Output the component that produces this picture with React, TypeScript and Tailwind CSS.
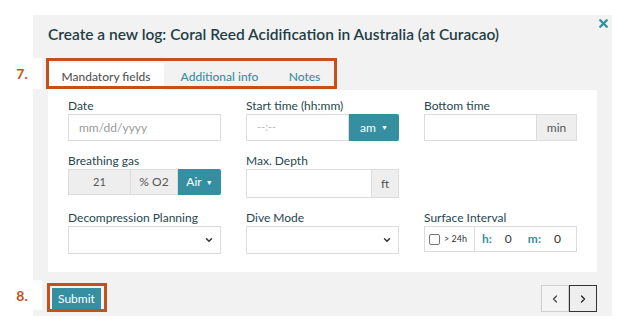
import { X, ChevronDown, ChevronLeft, ChevronRight } from "lucide-react";

function Label({ children }: { children: React.ReactNode }) {
  return <div className="h-[16px] text-[12px] leading-[16px] text-[#27464e]">{children}</div>;
}

function Select() {
  return (
    <div className="flex h-[28px] items-center justify-end border border-[#dcdcdc] bg-white pr-[6px]">
      <ChevronDown size={10} strokeWidth={3.5} className="text-[#333]" />
    </div>
  );
}

export default function App() {
  return (
    <div className="relative h-[327px] w-[626px] bg-white pt-[15px] pl-[33px] font-['Lato',sans-serif]">
      <div className="relative h-[301px] w-[579px] bg-[#f2f2f2] pl-[15px] pr-[15px] pt-[9px]">
        <button className="absolute right-[2px] top-[2px] text-[#358fa0]">
          <X size={13} strokeWidth={4.5} />
        </button>
        <h1 className="text-[15.5px] leading-[20px] font-semibold text-[#1f3e46]">
          Create a new log: Coral Reed Acidification in Australia (at Curacao)
        </h1>

        <div className="mt-[19px] flex h-[27px] text-[12px] font-medium">
          <div className="flex w-[116px] items-center justify-center bg-white text-[#555]">Mandatory fields</div>
          <div className="flex w-[111px] items-center justify-center text-[#3a8fa0]">Additional info</div>
          <div className="flex w-[59px] items-center justify-center text-[#3a8fa0]">Notes</div>
        </div>

        <div className="h-[182px] bg-white pl-[20px] pt-[8px]">
          <div className="grid w-[509px] grid-cols-3 gap-x-[25px] gap-y-[12px]">
            <div>
              <Label>Date</Label>
              <div className="flex h-[27px] items-center border border-[#dcdcdc] pl-[10px] text-[12px] text-[#9a9a9a]">
                mm/dd/yyyy
              </div>
            </div>
            <div>
              <Label>Start time (hh:mm)</Label>
              <div className="flex h-[27px]">
                <div className="flex flex-1 items-center border border-[#dcdcdc] pl-[10px] text-[11px] text-[#bbb]">--:--</div>
                <div className="flex w-[50px] items-center justify-center gap-[5px] rounded-r-[2px] bg-[#358fa0] text-[12px] text-white">
                  am <span className="text-[7px]">▼</span>
                </div>
              </div>
            </div>
            <div>
              <Label>Bottom time</Label>
              <div className="flex h-[27px]">
                <div className="flex-1 border border-[#dcdcdc]" />
                <div className="flex w-[40px] items-center justify-center border border-l-0 border-[#dcdcdc] bg-[#eeeeee] text-[12px] text-[#555]">
                  min
                </div>
              </div>
            </div>

            <div>
              <Label>Breathing gas</Label>
              <div className="flex h-[26px] text-[12px] text-[#555]">
                <div className="flex w-[63px] items-center justify-center border border-[#dcdcdc] bg-[#eeeeee] text-[11px]">21</div>
                <div className="flex w-[47px] items-center justify-center border border-l-0 border-[#dcdcdc] bg-[#eeeeee]">% O2</div>
                <div className="flex flex-1 items-center justify-center gap-[4px] rounded-r-[2px] bg-[#358fa0] text-white">
                  Air <span className="text-[7px]">▼</span>
                </div>
              </div>
            </div>
            <div>
              <Label>Max. Depth</Label>
              <div className="flex h-[29px]">
                <div className="flex-1 border border-[#dcdcdc]" />
                <div className="flex w-[27px] items-center justify-center border border-l-0 border-[#dcdcdc] bg-[#eeeeee] text-[12px] text-[#555]">
                  ft
                </div>
              </div>
            </div>
            <div />

            <div>
              <Label>Decompression Planning</Label>
              <Select />
            </div>
            <div>
              <Label>Dive Mode</Label>
              <Select />
            </div>
            <div>
              <Label>Surface Interval</Label>
              <div className="flex h-[26px]">
                <div className="flex w-[51px] items-center gap-[4px] border border-[#dcdcdc] pl-[4px] text-[9px] text-[#333]">
                  <span className="h-[11px] w-[11px] rounded-[2px] border border-[#777] bg-white" />
                  &gt; 24h
                </div>
                <div className="flex flex-1 items-center border border-l-0 border-[#dcdcdc] pl-[7px] text-[12px]">
                  <span className="font-bold text-[#3a8fa0]">h:</span>
                  <span className="ml-[13px] text-[#333]">0</span>
                  <span className="ml-[16px] font-bold text-[#3a8fa0]">m:</span>
                  <span className="ml-[13px] text-[#333]">0</span>
                </div>
              </div>
            </div>
          </div>
        </div>

        <div className="mt-[13px] flex items-center justify-between">
          <button className="ml-[4px] h-[21px] bg-[#358fa0] px-[6px] text-[12px] text-white">Submit</button>
          <div className="flex">
            <button className="flex h-[27px] w-[28px] items-center justify-center border border-[#cfcfcf] bg-[#f4f4f4] text-[#444]">
              <ChevronLeft size={12} strokeWidth={2.5} />
            </button>
            <button className="flex h-[27px] w-[28px] items-center justify-center border border-[#333] bg-[#eeeeee] text-[#222]">
              <ChevronRight size={12} strokeWidth={2.5} />
            </button>
          </div>
        </div>
      </div>

      <div className="absolute left-0 top-[58px] flex h-[31px] w-[42px] items-center justify-center bg-white pl-[2px] text-[14px] font-bold text-[#c4501b]">
        7.
      </div>
      <div className="absolute left-[46px] top-[58px] h-[31px] w-[291px] border-[3px] border-[#c4501b]" />

      <div className="absolute left-0 top-[280px] flex h-[30px] w-[42px] items-center justify-center bg-white pl-[2px] text-[14px] font-bold text-[#c4501b]">
        8.
      </div>
      <div className="absolute left-[47px] top-[283px] h-[29px] w-[60px] border-[3px] border-[#c4501b]" />
    </div>
  );
}
